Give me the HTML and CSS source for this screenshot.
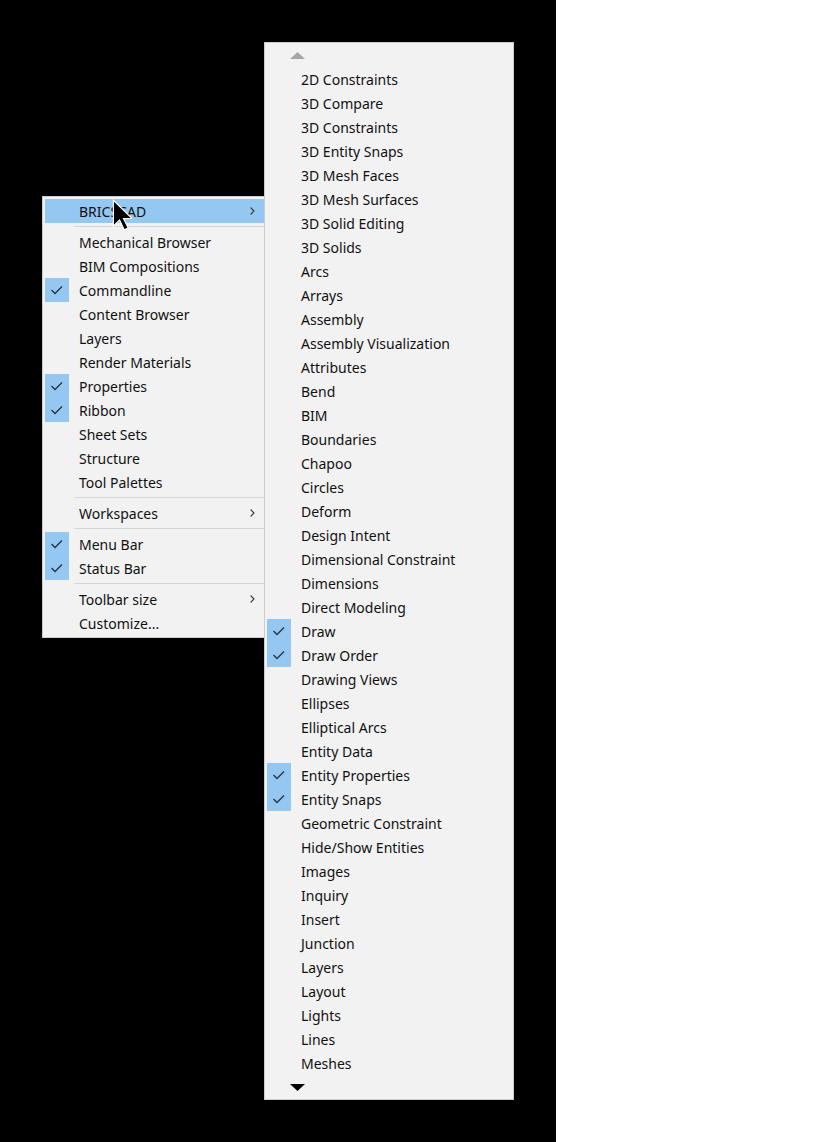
FILE: index.html
```html
<!DOCTYPE html>
<html>
<head>
<meta charset="utf-8">
<link rel="stylesheet" href="styles.css">
</head>
<body>
<div class="desk">
  <div class="menu menu-main">
    <div class="item hot"><span class="chk"></span><span class="lbl">BRICSCAD</span><svg class="sub" width="5" height="8" viewBox="0 0 5 8"><polyline points="0.6,0.5 4,4 0.6,7.5"/></svg></div>
    <div class="sep"></div>
    <div class="item"><span class="chk"></span><span class="lbl">Mechanical Browser</span></div>
    <div class="item"><span class="chk"></span><span class="lbl">BIM Compositions</span></div>
    <div class="item"><span class="chk on"><svg viewBox="0 0 24 24"><polyline points="6.5,12 10,15.5 17,8.5"/></svg></span><span class="lbl">Commandline</span></div>
    <div class="item"><span class="chk"></span><span class="lbl">Content Browser</span></div>
    <div class="item"><span class="chk"></span><span class="lbl">Layers</span></div>
    <div class="item"><span class="chk"></span><span class="lbl">Render Materials</span></div>
    <div class="item"><span class="chk on"><svg viewBox="0 0 24 24"><polyline points="6.5,12 10,15.5 17,8.5"/></svg></span><span class="lbl">Properties</span></div>
    <div class="item"><span class="chk on"><svg viewBox="0 0 24 24"><polyline points="6.5,12 10,15.5 17,8.5"/></svg></span><span class="lbl">Ribbon</span></div>
    <div class="item"><span class="chk"></span><span class="lbl">Sheet Sets</span></div>
    <div class="item"><span class="chk"></span><span class="lbl">Structure</span></div>
    <div class="item"><span class="chk"></span><span class="lbl">Tool Palettes</span></div>
    <div class="sep"></div>
    <div class="item"><span class="chk"></span><span class="lbl">Workspaces</span><svg class="sub" width="5" height="8" viewBox="0 0 5 8"><polyline points="0.6,0.5 4,4 0.6,7.5"/></svg></div>
    <div class="sep"></div>
    <div class="item"><span class="chk on"><svg viewBox="0 0 24 24"><polyline points="6.5,12 10,15.5 17,8.5"/></svg></span><span class="lbl">Menu Bar</span></div>
    <div class="item"><span class="chk on"><svg viewBox="0 0 24 24"><polyline points="6.5,12 10,15.5 17,8.5"/></svg></span><span class="lbl">Status Bar</span></div>
    <div class="sep"></div>
    <div class="item"><span class="chk"></span><span class="lbl">Toolbar size</span><svg class="sub" width="5" height="8" viewBox="0 0 5 8"><polyline points="0.6,0.5 4,4 0.6,7.5"/></svg></div>
    <div class="item"><span class="chk"></span><span class="lbl">Customize...</span></div>
  </div>

  <div class="menu menu-sub">
    <div class="scroll"><svg width="15" height="7" viewBox="0 0 15 7"><polygon class="up" points="0,7 15,7 7.5,0"/></svg></div>
    <div class="item"><span class="chk"></span><span class="lbl">2D Constraints</span></div>
    <div class="item"><span class="chk"></span><span class="lbl">3D Compare</span></div>
    <div class="item"><span class="chk"></span><span class="lbl">3D Constraints</span></div>
    <div class="item"><span class="chk"></span><span class="lbl">3D Entity Snaps</span></div>
    <div class="item"><span class="chk"></span><span class="lbl">3D Mesh Faces</span></div>
    <div class="item"><span class="chk"></span><span class="lbl">3D Mesh Surfaces</span></div>
    <div class="item"><span class="chk"></span><span class="lbl">3D Solid Editing</span></div>
    <div class="item"><span class="chk"></span><span class="lbl">3D Solids</span></div>
    <div class="item"><span class="chk"></span><span class="lbl">Arcs</span></div>
    <div class="item"><span class="chk"></span><span class="lbl">Arrays</span></div>
    <div class="item"><span class="chk"></span><span class="lbl">Assembly</span></div>
    <div class="item"><span class="chk"></span><span class="lbl">Assembly Visualization</span></div>
    <div class="item"><span class="chk"></span><span class="lbl">Attributes</span></div>
    <div class="item"><span class="chk"></span><span class="lbl">Bend</span></div>
    <div class="item"><span class="chk"></span><span class="lbl">BIM</span></div>
    <div class="item"><span class="chk"></span><span class="lbl">Boundaries</span></div>
    <div class="item"><span class="chk"></span><span class="lbl">Chapoo</span></div>
    <div class="item"><span class="chk"></span><span class="lbl">Circles</span></div>
    <div class="item"><span class="chk"></span><span class="lbl">Deform</span></div>
    <div class="item"><span class="chk"></span><span class="lbl">Design Intent</span></div>
    <div class="item"><span class="chk"></span><span class="lbl">Dimensional Constraint</span></div>
    <div class="item"><span class="chk"></span><span class="lbl">Dimensions</span></div>
    <div class="item"><span class="chk"></span><span class="lbl">Direct Modeling</span></div>
    <div class="item"><span class="chk on"><svg viewBox="0 0 24 24"><polyline points="6.5,12 10,15.5 17,8.5"/></svg></span><span class="lbl">Draw</span></div>
    <div class="item"><span class="chk on"><svg viewBox="0 0 24 24"><polyline points="6.5,12 10,15.5 17,8.5"/></svg></span><span class="lbl">Draw Order</span></div>
    <div class="item"><span class="chk"></span><span class="lbl">Drawing Views</span></div>
    <div class="item"><span class="chk"></span><span class="lbl">Ellipses</span></div>
    <div class="item"><span class="chk"></span><span class="lbl">Elliptical Arcs</span></div>
    <div class="item"><span class="chk"></span><span class="lbl">Entity Data</span></div>
    <div class="item"><span class="chk on"><svg viewBox="0 0 24 24"><polyline points="6.5,12 10,15.5 17,8.5"/></svg></span><span class="lbl">Entity Properties</span></div>
    <div class="item"><span class="chk on"><svg viewBox="0 0 24 24"><polyline points="6.5,12 10,15.5 17,8.5"/></svg></span><span class="lbl">Entity Snaps</span></div>
    <div class="item"><span class="chk"></span><span class="lbl">Geometric Constraint</span></div>
    <div class="item"><span class="chk"></span><span class="lbl">Hide/Show Entities</span></div>
    <div class="item"><span class="chk"></span><span class="lbl">Images</span></div>
    <div class="item"><span class="chk"></span><span class="lbl">Inquiry</span></div>
    <div class="item"><span class="chk"></span><span class="lbl">Insert</span></div>
    <div class="item"><span class="chk"></span><span class="lbl">Junction</span></div>
    <div class="item"><span class="chk"></span><span class="lbl">Layers</span></div>
    <div class="item"><span class="chk"></span><span class="lbl">Layout</span></div>
    <div class="item"><span class="chk"></span><span class="lbl">Lights</span></div>
    <div class="item"><span class="chk"></span><span class="lbl">Lines</span></div>
    <div class="item"><span class="chk"></span><span class="lbl">Meshes</span></div>
    <div class="scroll"><svg width="15" height="7" viewBox="0 0 15 7"><polygon class="down" points="0,0 15,0 7.5,7"/></svg></div>
  </div>

  <svg class="cursor" width="20" height="32" viewBox="0 0 16 26"><polygon points="1,1 1,22 6,17 9.8,25 13,23.6 9.2,15.8 16,15.8" fill="#000" stroke="#fff" stroke-width="0.9" stroke-linejoin="miter"/></svg>
</div>
</body>
</html>
```

FILE: styles.css
```css
html, body {
  margin: 0;
  padding: 0;
  background: #ffffff;
}

.desk {
  position: relative;
  width: 556px;
  height: 1142px;
  background: #000000;
  font-family: "Noto Sans", "Open Sans", sans-serif;
  font-size: 14px;
  color: #111;
}

.menu {
  position: absolute;
  box-sizing: border-box;
  background: #f2f2f2;
  border: 1px solid #cccccc;
  display: flex;
  flex-direction: column;
}

.menu-main {
  left: 42px;
  top: 196px;
  width: 225px;
  padding: 2px 2px;
  z-index: 1;
}

.menu-sub {
  left: 264px;
  top: 42px;
  width: 250px;
  height: 1058px;
  padding: 0 2px;
  z-index: 2;
}

.item {
  height: 24px;
  display: flex;
  align-items: center;
  white-space: nowrap;
}

.item.hot {
  background: #94c8f2;
}

.chk {
  width: 24px;
  height: 24px;
  flex: none;
  display: flex;
}

.chk.on {
  background: #94c8f2;
}

.chk svg {
  width: 24px;
  height: 24px;
  fill: none;
  stroke: #26323d;
  stroke-width: 1.3;
}

.lbl {
  margin-left: 10px;
  flex: 1;
  box-sizing: border-box;
  height: 24px;
  padding-top: 2px;
  line-height: 22px;
}

.sub {
  flex: none;
  margin-right: 9px;
  fill: none;
  stroke: #3a3a3a;
  stroke-width: 1.1;
}

.sep {
  height: 1px;
  margin: 3px 0 3px 29px;
  background: #d6d6d6;
}

.scroll {
  height: 24px;
  display: flex;
  align-items: center;
  padding-left: 23px;
}

.scroll .up {
  fill: #a6a6a6;
}

.scroll .down {
  fill: #000000;
}

.cursor {
  position: absolute;
  left: 112px;
  top: 199px;
  z-index: 5;
}
```
